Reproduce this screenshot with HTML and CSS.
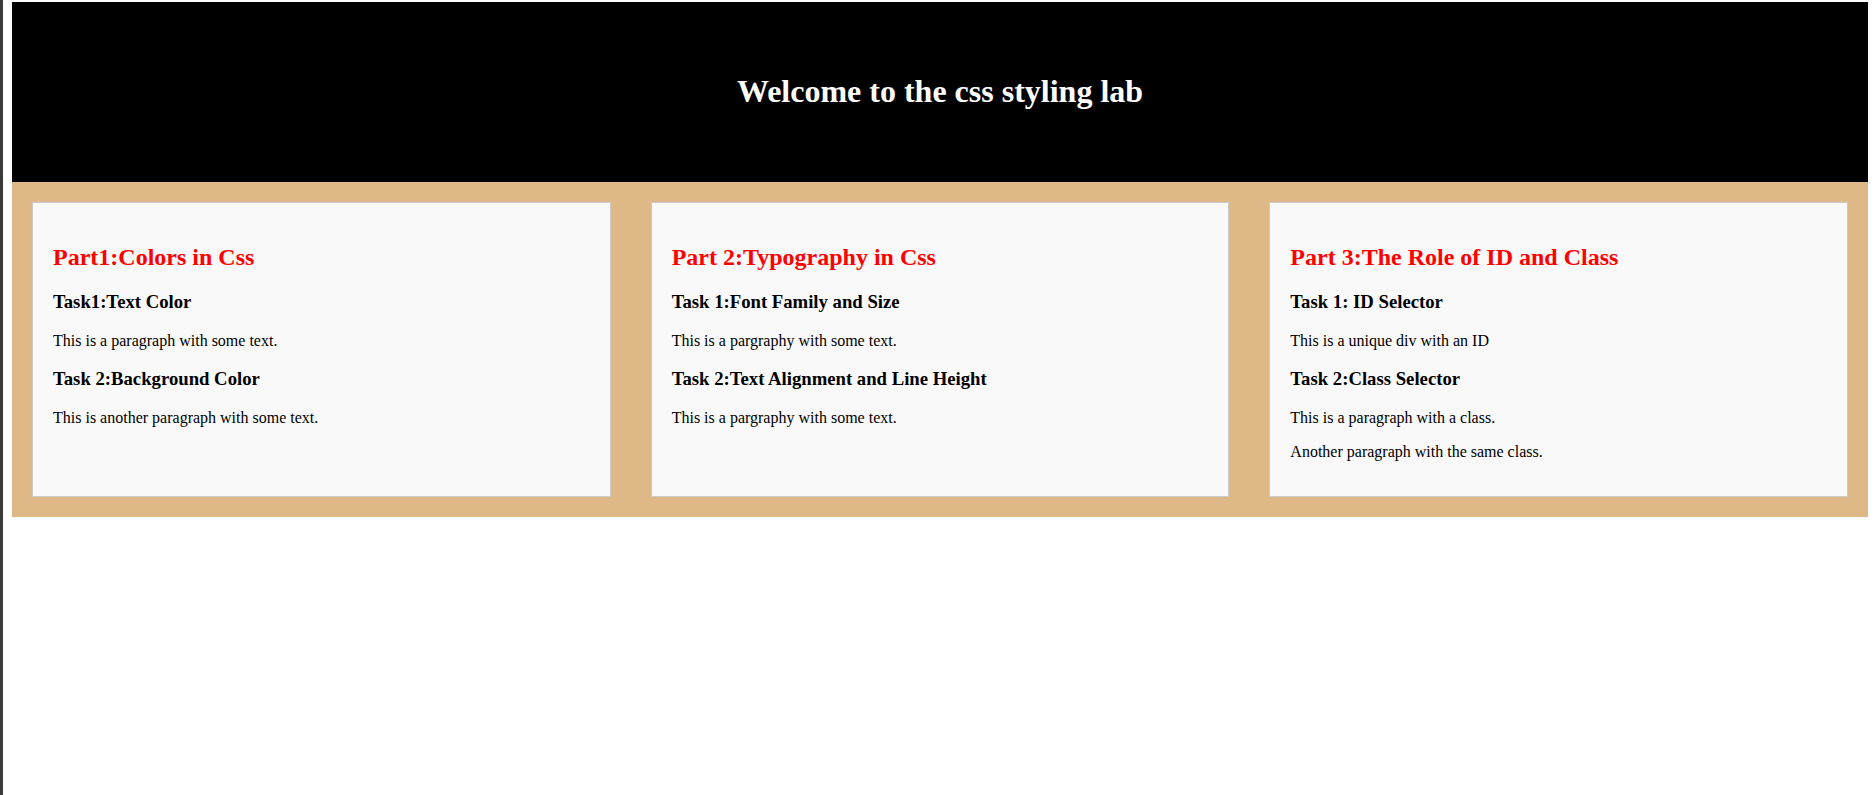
FILE: index.html
```html
<!DOCTYPE html>
<html lang="en">
<head>
<meta charset="utf-8">
<title>CSS Styling Lab</title>
<link rel="stylesheet" href="styles.css">
</head>
<body>
<div class="frame">
  <div class="page">
    <header class="banner">
      <h1>Welcome to the css styling lab</h1>
    </header>
    <main class="parts">
      <section class="card">
        <h2>Part1:Colors in Css</h2>
        <h3>Task1:Text Color</h3>
        <p>This is a paragraph with some text.</p>
        <h3>Task 2:Background Color</h3>
        <p>This is another paragraph with some text.</p>
      </section>
      <section class="card">
        <h2>Part 2:Typography in Css</h2>
        <h3>Task 1:Font Family and Size</h3>
        <p>This is a pargraphy with some text.</p>
        <h3>Task 2:Text Alignment and Line Height</h3>
        <p>This is a pargraphy with some text.</p>
      </section>
      <section class="card">
        <h2>Part 3:The Role of ID and Class</h2>
        <h3>Task 1: ID Selector</h3>
        <p>This is a unique div with an ID</p>
        <h3>Task 2:Class Selector</h3>
        <p>This is a paragraph with a class.</p>
        <p>Another paragraph with the same class.</p>
      </section>
    </main>
  </div>
</div>
</body>
</html>
```
FILE: styles.css
```css
html, body {
  margin: 0;
  padding: 0;
  background: #ffffff;
}

body {
  font-family: "Liberation Serif", "Times New Roman", serif;
  color: #000;
  min-height: 795px;
}

.frame {
  min-height: 795px;
  border-left: 3px solid #3a3a3a;
  padding: 2px 5px 0 9px;
  box-sizing: border-box;
}

.banner {
  background: #000;
  color: #fff;
  text-align: center;
  padding: 50px 0;
}

.banner h1 {
  font-size: 32px;
  margin: 21.44px 0;
}

.parts {
  display: flex;
  gap: 40px;
  padding: 20px;
  background: #deb887;
}

.card {
  flex: 1 1 0;
  background: #f9f9f9;
  border: 1px solid #cccccc;
  padding: 0 20px;
}

.card h2 {
  color: #ff0000;
  font-size: 24px;
  margin: 41px 0 19.92px;
}

.card h3 {
  font-size: 18.72px;
  margin: 18.72px 0;
}

.card p {
  font-size: 16px;
  margin: 16px 0;
}

.card p:last-child {
  margin-bottom: 35px;
}
```
